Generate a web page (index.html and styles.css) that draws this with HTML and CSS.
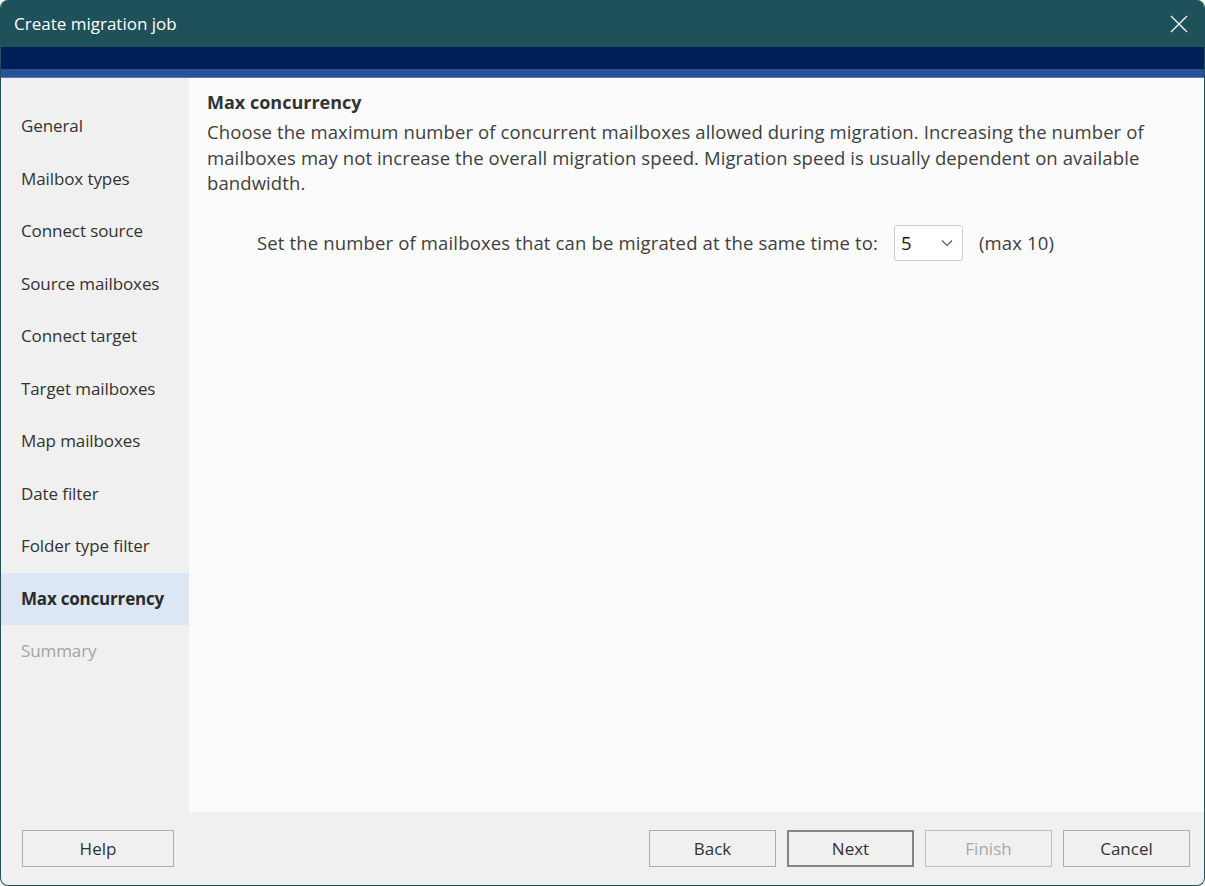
FILE: index.html
```
<!DOCTYPE html>
<html>
<head>
<title>Create migration job</title>
<link rel="stylesheet" href="styles.css">
</head>
<body>

<div class="window">
	<div class="titlebar">
		<span class="title">Create migration job</span>
		<svg class="close" width="18" height="18" viewBox="0 0 18 18">
			<path d="M1 1 L17 17 M17 1 L1 17" stroke="#ffffff" stroke-width="1.3" fill="none"/>
		</svg>
	</div>
	<div class="banner"></div>
	<div class="stripe"></div>

	<div class="body">
		<ul class="steps">
			<li>General</li>
			<li>Mailbox types</li>
			<li>Connect source</li>
			<li>Source mailboxes</li>
			<li>Connect target</li>
			<li>Target mailboxes</li>
			<li>Map mailboxes</li>
			<li>Date filter</li>
			<li>Folder type filter</li>
			<li class="current">Max concurrency</li>
			<li class="disabled">Summary</li>
		</ul>

		<div class="page">
			<h1>Max concurrency</h1>
			<p class="desc">Choose the maximum number of concurrent mailboxes allowed during migration. Increasing the number of mailboxes may not increase the overall migration speed. Migration speed is usually dependent on available bandwidth.</p>

			<div class="setting">
				<span>Set the number of mailboxes that can be migrated at the same time to:</span>
				<div class="combo">
					<span class="value">5</span>
					<svg width="12" height="8" viewBox="0 0 12 8">
						<path d="M1 1.5 L6 6.5 L11 1.5" stroke="#555555" stroke-width="1.1" fill="none"/>
					</svg>
				</div>
				<span class="hint">(max 10)</span>
			</div>
		</div>
	</div>

	<div class="footer">
		<button class="btn">Help</button>
		<div class="nav">
			<button class="btn">Back</button>
			<button class="btn default">Next</button>
			<button class="btn" disabled>Finish</button>
			<button class="btn">Cancel</button>
		</div>
	</div>
</div>

</body>
</html>
```

FILE: styles.css
```
html, body {
	margin: 0;
	padding: 0;
	background: #ffffff;
	font-family: "Open Sans", "Noto Sans", sans-serif;
}

.window {
	width: 1205px;
	height: 886px;
	box-sizing: border-box;
	border: 1px solid #1e5159;
	border-top: none;
	border-radius: 8px;
	overflow: hidden;
	display: flex;
	flex-direction: column;
	background: #f0f0f0;
}

.titlebar {
	height: 47px;
	background: #1e5159;
	display: flex;
	align-items: center;
	justify-content: space-between;
	padding: 0 16px 0 13px;
	flex-shrink: 0;
}

.title {
	color: #ffffff;
	font-size: 17px;
}

.close {
	margin-top: 1px;
}

.banner {
	height: 22px;
	background: #001f56;
	flex-shrink: 0;
}

.stripe {
	height: 9px;
	background: #2a5097;
	border-bottom: 1px solid #5a7ab5;
	box-sizing: border-box;
	flex-shrink: 0;
}

.body {
	display: flex;
	height: 734px;
	flex-shrink: 0;
}

.steps {
	list-style: none;
	margin: 0;
	padding: 22px 0 0 0;
	width: 188px;
	flex-shrink: 0;
}

.steps li {
	height: 52.5px;
	line-height: 51px;
	padding-left: 20px;
	font-size: 17px;
	letter-spacing: -0.1px;
	color: #333333;
}

.steps li.current {
	background: #dce6f4;
	font-weight: bold;
	letter-spacing: -0.2px;
	color: #2b2b2b;
}

.steps li.disabled {
	color: #a3a3a3;
}

.page {
	flex: 1;
	background: #fbfbfb;
	padding: 12px 30px 0 18px;
	color: #404040;
}

.page h1 {
	font-size: 18px;
	line-height: 24px;
	font-weight: bold;
	margin: 0 0 5px 0;
	color: #333333;
}

.desc {
	font-size: 18.5px;
	line-height: 25.5px;
	letter-spacing: 0.1px;
	margin: 0;
}

.setting {
	display: flex;
	align-items: center;
	margin: 29px 0 0 50px;
	font-size: 18.5px;
	letter-spacing: 0.15px;
}

.combo {
	width: 69px;
	height: 36px;
	box-sizing: border-box;
	border: 1px solid #cccccc;
	border-radius: 3px;
	background: #ffffff;
	display: flex;
	align-items: center;
	justify-content: space-between;
	padding: 0 9px 0 6px;
	margin: 0 16px 0 16px;
	color: #1a1a1a;
}

.footer {
	flex: 1;
	display: flex;
	justify-content: space-between;
	align-items: center;
	padding: 0 14px 0 21px;
}

.nav {
	display: flex;
	gap: 11px;
}

.btn {
	font-family: "Open Sans", "Noto Sans", sans-serif;
	font-size: 17px;
	color: #333333;
	background: #f0f0f0;
	border: 1px solid #adadad;
	height: 37px;
	width: 127px;
	padding: 0;
}

.footer > .btn {
	width: 152px;
}

.btn.default {
	border: 2px solid #858585;
}

.btn:disabled {
	color: #a8a8a8;
	border-color: #bfbfbf;
}
```
